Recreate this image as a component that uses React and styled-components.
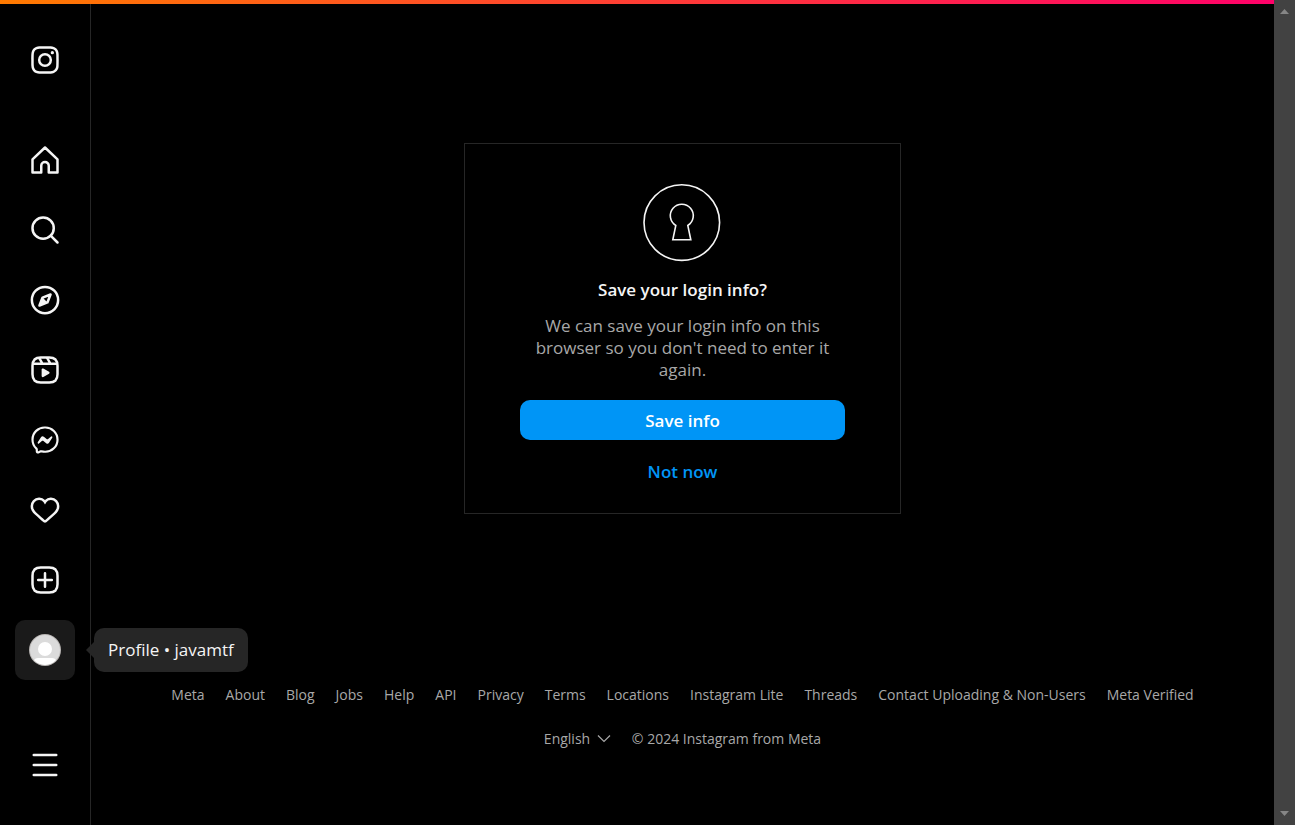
import React from "react";
import styled, { createGlobalStyle } from "styled-components";

const GlobalStyle = createGlobalStyle`
  *, *::before, *::after { box-sizing: border-box; }
  body {
    margin: 0;
    background: #000;
    color: #f5f5f5;
    font-family: "Open Sans", "Noto Sans", sans-serif;
  }
  button, select { font-family: inherit; }
`;

const Shell = styled.div`
  display: flex;
  min-height: 100vh;
`;

const Page = styled.div`
  flex: 1;
  min-width: 0;
  display: flex;
  flex-direction: column;
`;

const LoadingBar = styled.div`
  height: 4px;
  background: linear-gradient(to right, #ff7a00, #ff0169);
`;

const Body = styled.div`
  flex: 1;
  display: flex;
`;

const Sidebar = styled.nav`
  position: relative;
  width: 91px;
  flex: none;
  display: flex;
  flex-direction: column;
  align-items: center;
  justify-content: space-between;
  padding: 26px 0 30px;
  border-right: 1px solid #262626;
`;

const NavGroup = styled.div`
  display: flex;
  flex-direction: column;
  gap: 40px;
`;

const NavList = styled.ul`
  list-style: none;
  margin: 0;
  padding: 0;
  display: flex;
  flex-direction: column;
  gap: 10px;
`;

const NavItem = styled.li`
  position: relative;
`;

const navTarget = `
  width: 60px;
  height: 60px;
  display: flex;
  align-items: center;
  justify-content: center;
  padding: 0;
  border: 0;
  border-radius: 10px;
  color: #f5f5f5;
`;

const NavLink = styled.a`
  ${navTarget}
  background: ${(p) => (p.$active ? "#1a1a1a" : "transparent")};
`;

const NavButton = styled.button`
  ${navTarget}
  background: transparent;
  cursor: pointer;
`;

const Icon = styled.svg`
  display: block;
  width: 30px;
  height: 30px;
  fill: currentColor;
`;

const Avatar = styled.svg`
  display: block;
  width: 32px;
  height: 32px;
`;

const Tooltip = styled.div`
  position: absolute;
  left: 79px;
  top: 8px;
  z-index: 1;
  height: 44px;
  padding: 0 14px;
  border-radius: 10px;
  background: #262626;
  font-size: 17px;
  line-height: 44px;
  white-space: nowrap;

  &::before {
    content: "";
    position: absolute;
    left: -8px;
    top: 14px;
    border-style: solid;
    border-width: 8px 8px 8px 0;
    border-color: transparent #262626;
  }
`;

const Main = styled.main`
  flex: 1;
  min-width: 0;
  display: flex;
  flex-direction: column;
`;

const Stage = styled.section`
  flex: 1;
  display: flex;
  align-items: center;
  justify-content: center;
`;

const Card = styled.div`
  width: 437px;
  max-width: 100%;
  padding: 40px 55px 30px;
  border: 1px solid #262626;
  display: flex;
  flex-direction: column;
  align-items: center;
  text-align: center;
`;

const Keyhole = styled.svg`
  display: block;
  width: 79px;
  height: 78px;
  fill: none;
  stroke: #f5f5f5;
`;

const Title = styled.h1`
  margin: 16px 0 13px;
  font-size: 17px;
  line-height: 24px;
  font-weight: 600;
`;

const Message = styled.p`
  margin: 0 0 19px;
  padding: 0 10px;
  font-size: 17px;
  line-height: 22px;
  color: #a8a8a8;
`;

const PrimaryButton = styled.button`
  width: 100%;
  height: 40px;
  border: 0;
  border-radius: 10px;
  background: #0095f6;
  color: #fff;
  font-size: 17px;
  font-weight: 600;
  cursor: pointer;
`;

const TextButton = styled.button`
  margin-top: 21px;
  padding: 0;
  border: 0;
  background: none;
  color: #0095f6;
  font-size: 17px;
  line-height: 22px;
  font-weight: 600;
  cursor: pointer;
`;

const Footer = styled.footer`
  display: flex;
  flex-direction: column;
  align-items: center;
  gap: 20px;
  padding: 30px 20px 74px;
  font-size: 14px;
  line-height: 24px;
  color: #a8a8a8;
`;

const FooterRow = styled.div`
  display: flex;
  flex-wrap: wrap;
  justify-content: center;
  column-gap: 21px;
`;

const FooterLink = styled.a`
  color: inherit;
  text-decoration: none;
`;

const Language = styled.label`
  display: flex;
  align-items: center;
  gap: 6px;
`;

const LanguageSelect = styled.select`
  appearance: none;
  padding: 0;
  border: 0;
  background: #000;
  color: inherit;
  font-size: 14px;
  line-height: 24px;
`;

const Chevron = styled.svg`
  width: 14px;
  height: 14px;
  fill: none;
  stroke: currentColor;
`;

const ScrollTrack = styled.div`
  width: 21px;
  flex: none;
  display: flex;
  flex-direction: column;
  align-items: center;
  justify-content: space-between;
  padding: 9px 0;
  background: #424242;
`;

const ScrollArrow = styled.svg`
  display: block;
  width: 9px;
  height: 5px;
  fill: #868686;
`;

const stroke = {
  fill: "none",
  stroke: "currentColor",
  strokeWidth: 2,
  strokeLinecap: "round",
  strokeLinejoin: "round",
};

const LogoIcon = () => (
  <Icon viewBox="0 0 24 24" aria-hidden="true">
    <path d="M12 2.982c2.937 0 3.285.011 4.445.064a6.087 6.087 0 0 1 2.042.379 3.408 3.408 0 0 1 1.265.823 3.408 3.408 0 0 1 .823 1.265 6.087 6.087 0 0 1 .379 2.042c.053 1.16.064 1.508.064 4.445s-.011 3.285-.064 4.445a6.087 6.087 0 0 1-.379 2.042 3.643 3.643 0 0 1-2.088 2.088 6.087 6.087 0 0 1-2.042.379c-1.16.053-1.508.064-4.445.064s-3.285-.011-4.445-.064a6.087 6.087 0 0 1-2.043-.379 3.408 3.408 0 0 1-1.264-.823 3.408 3.408 0 0 1-.823-1.265 6.087 6.087 0 0 1-.379-2.042c-.053-1.16-.064-1.508-.064-4.445s.011-3.285.064-4.445a6.087 6.087 0 0 1 .379-2.042 3.408 3.408 0 0 1 .823-1.265 3.408 3.408 0 0 1 1.265-.823 6.087 6.087 0 0 1 2.042-.379c1.16-.053 1.508-.064 4.445-.064M12 1c-2.987 0-3.362.013-4.535.066a8.074 8.074 0 0 0-2.67.511 5.392 5.392 0 0 0-1.949 1.27 5.392 5.392 0 0 0-1.269 1.948 8.074 8.074 0 0 0-.51 2.67C1.012 8.638 1 9.013 1 12s.013 3.362.066 4.535a8.074 8.074 0 0 0 .511 2.67 5.392 5.392 0 0 0 1.27 1.949 5.392 5.392 0 0 0 1.948 1.269 8.074 8.074 0 0 0 2.67.51C8.638 22.988 9.013 23 12 23s3.362-.013 4.535-.066a8.074 8.074 0 0 0 2.67-.511 5.625 5.625 0 0 0 3.218-3.218 8.074 8.074 0 0 0 .51-2.67C22.988 15.362 23 14.987 23 12s-.013-3.362-.066-4.535a8.074 8.074 0 0 0-.511-2.67 5.392 5.392 0 0 0-1.27-1.949 5.392 5.392 0 0 0-1.948-1.269 8.074 8.074 0 0 0-2.67-.51C15.362 1.012 14.987 1 12 1Zm0 5.351A5.649 5.649 0 1 0 17.649 12 5.649 5.649 0 0 0 12 6.351Zm0 9.316A3.667 3.667 0 1 1 15.667 12 3.667 3.667 0 0 1 12 15.667Zm5.872-10.859a1.32 1.32 0 1 0 1.32 1.32 1.32 1.32 0 0 0-1.32-1.32Z" />
  </Icon>
);

const HomeIcon = () => (
  <Icon viewBox="0 0 24 24" aria-hidden="true">
    <path
      {...stroke}
      strokeLinecap="butt"
      d="M9.005 16.545a2.997 2.997 0 0 1 2.997-2.997A2.997 2.997 0 0 1 15 16.545V22h7V11.543L12 2 2 11.543V22h7.005Z"
    />
  </Icon>
);

const SearchIcon = () => (
  <Icon viewBox="0 0 24 24" aria-hidden="true">
    <path {...stroke} d="M19 10.5A8.5 8.5 0 1 1 10.5 2a8.5 8.5 0 0 1 8.5 8.5Z" />
    <path {...stroke} d="M16.511 16.511 22 22" />
  </Icon>
);

const ExploreIcon = () => (
  <Icon viewBox="0 0 24 24" aria-hidden="true">
    <path {...stroke} d="M13.941 13.953 7.581 16.424 10.06 10.056 16.42 7.585Z" />
    <path fillRule="evenodd" d="M10.06 10.056 13.949 13.945 7.581 16.424Z" />
    <circle {...stroke} cx="12.001" cy="12.005" r="10.5" />
  </Icon>
);

const ReelsIcon = () => (
  <Icon viewBox="0 0 24 24" aria-hidden="true">
    <path {...stroke} strokeLinecap="butt" d="M2.049 7.002H21.95M13.504 2.001l2.858 5.001M7.207 2.11l2.795 4.892" />
    <path
      {...stroke}
      d="M2 12.001v3.449c0 2.849.698 4.006 1.606 4.945.94.908 2.098 1.607 4.946 1.607h6.896c2.848 0 4.006-.699 4.946-1.607.908-.939 1.606-2.096 1.606-4.945V8.552c0-2.848-.698-4.006-1.606-4.945C19.454 2.699 18.296 2 15.448 2H8.552c-2.848 0-4.006.699-4.946 1.607C2.698 4.546 2 5.704 2 8.552Z"
    />
    <path d="M9.763 17.664a.908.908 0 0 1-.454-.787V11.63a.909.909 0 0 1 1.364-.788l4.545 2.624a.909.909 0 0 1 0 1.575l-4.545 2.624a.91.91 0 0 1-.91 0Z" />
  </Icon>
);

const MessengerIcon = () => (
  <Icon viewBox="0 0 24 24" aria-hidden="true">
    <path
      fill="none"
      stroke="currentColor"
      strokeWidth="1.739"
      d="M12.003 2.001a9.705 9.705 0 1 1 0 19.4 10.876 10.876 0 0 1-2.895-.384.798.798 0 0 0-.533.04l-1.984.876a.801.801 0 0 1-1.123-.708l-.054-1.78a.806.806 0 0 0-.27-.569 9.49 9.49 0 0 1-3.14-7.175 9.65 9.65 0 0 1 10-9.7Z"
    />
    <path d="M17.79 10.132a.659.659 0 0 0-.962-.873l-2.556 2.05a.63.63 0 0 1-.758.002L11.06 9.47a1.576 1.576 0 0 0-2.277.42l-2.567 3.98a.659.659 0 0 0 .961.875l2.556-2.049a.63.63 0 0 1 .759-.002l2.452 1.84a1.576 1.576 0 0 0 2.278-.42Z" />
  </Icon>
);

const HeartIcon = () => (
  <Icon viewBox="0 0 24 24" aria-hidden="true">
    <path d="M16.792 3.904A4.989 4.989 0 0 1 21.5 9.122c0 3.072-2.652 4.959-5.197 7.222-2.512 2.243-3.865 3.469-4.303 3.752-.477-.309-2.143-1.823-4.303-3.752C5.141 14.072 2.5 12.167 2.5 9.122a4.989 4.989 0 0 1 4.708-5.218 4.21 4.21 0 0 1 3.675 1.941c.84 1.175.98 1.763 1.12 1.763s.278-.588 1.11-1.766a4.17 4.17 0 0 1 3.679-1.938m0-2a6.04 6.04 0 0 0-4.797 2.127 6.052 6.052 0 0 0-4.787-2.127A6.985 6.985 0 0 0 .5 9.122c0 3.61 2.55 5.827 5.015 7.97.283.246.569.494.853.747l1.027.918a44.998 44.998 0 0 0 3.518 3.018 2 2 0 0 0 2.174 0 45.263 45.263 0 0 0 3.626-3.115l.922-.824c.293-.26.59-.519.885-.774 2.334-2.025 4.98-4.32 4.98-7.94a6.985 6.985 0 0 0-6.708-7.218Z" />
  </Icon>
);

const CreateIcon = () => (
  <Icon viewBox="0 0 24 24" aria-hidden="true">
    <path
      {...stroke}
      d="M2 12v3.45c0 2.849.698 4.005 1.606 4.944.94.909 2.098 1.608 4.946 1.608h6.896c2.848 0 4.006-.7 4.946-1.608C21.302 19.455 22 18.3 22 15.45V8.552c0-2.849-.698-4.006-1.606-4.945C19.454 2.7 18.296 2 15.448 2H8.552c-2.848 0-4.006.699-4.946 1.607C2.698 4.547 2 5.703 2 8.552Z"
    />
    <path {...stroke} d="M6.545 12.001h10.91M12.003 6.545v10.91" />
  </Icon>
);

const MenuIcon = () => (
  <Icon viewBox="0 0 24 24" aria-hidden="true">
    <path {...stroke} d="M3 4h18M3 12h18M3 20h18" />
  </Icon>
);

const navItems = [
  { label: "Home", Glyph: HomeIcon },
  { label: "Search", Glyph: SearchIcon },
  { label: "Explore", Glyph: ExploreIcon },
  { label: "Reels", Glyph: ReelsIcon },
  { label: "Messenger", Glyph: MessengerIcon },
  { label: "Notifications", Glyph: HeartIcon },
  { label: "New post", Glyph: CreateIcon },
];

const footerLinks = [
  "Meta",
  "About",
  "Blog",
  "Jobs",
  "Help",
  "API",
  "Privacy",
  "Terms",
  "Locations",
  "Instagram Lite",
  "Threads",
  "Contact Uploading & Non-Users",
  "Meta Verified",
];

export default function App() {
  return (
    <>
      <GlobalStyle />
      <Shell>
        <Page>
          <LoadingBar />
          <Body>
            <Sidebar>
              <NavGroup>
                <NavLink href="#" aria-label="Instagram">
                  <LogoIcon />
                </NavLink>
                <NavList>
                  {navItems.map(({ label, Glyph }) => (
                    <NavItem key={label}>
                      <NavLink href="#" aria-label={label}>
                        <Glyph />
                      </NavLink>
                    </NavItem>
                  ))}
                  <NavItem>
                    <NavLink href="#" $active aria-label="Profile" aria-describedby="profile-tip">
                      <Avatar viewBox="0 0 32 32" aria-hidden="true">
                        <clipPath id="avatar-clip">
                          <circle cx="16" cy="16" r="15" />
                        </clipPath>
                        <circle cx="16" cy="16" r="16" fill="#b9b6b4" />
                        <g clipPath="url(#avatar-clip)">
                          <rect width="32" height="32" fill="#dbdbdb" />
                          <circle cx="16" cy="15" r="7" fill="#fff" />
                          <path d="M5 32v-5c0-2 2-3 4-3h14c2 0 4 1 4 3v5Z" fill="#fff" />
                        </g>
                      </Avatar>
                    </NavLink>
                    <Tooltip id="profile-tip" role="tooltip">
                      Profile • javamtf
                    </Tooltip>
                  </NavItem>
                </NavList>
              </NavGroup>
              <NavButton type="button" aria-label="More">
                <MenuIcon />
              </NavButton>
            </Sidebar>
            <Main>
              <Stage>
                <Card>
                  <Keyhole viewBox="0 0 79 78" aria-hidden="true">
                    <circle cx="38.8" cy="38.6" r="37.8" strokeWidth="1.6" />
                    <path
                      strokeWidth="1.6"
                      d="M32.8 41.5A11.5 11.5 0 1 1 44.8 41.5L47.8 55.8H29.8Z"
                    />
                  </Keyhole>
                  <Title>Save your login info?</Title>
                  <Message>
                    We can save your login info on this browser so you don't need to enter it again.
                  </Message>
                  <PrimaryButton type="button">Save info</PrimaryButton>
                  <TextButton type="button">Not now</TextButton>
                </Card>
              </Stage>
              <Footer>
                <FooterRow>
                  {footerLinks.map((text) => (
                    <FooterLink key={text} href="#">
                      {text}
                    </FooterLink>
                  ))}
                </FooterRow>
                <FooterRow>
                  <Language>
                    <LanguageSelect aria-label="Switch display language">
                      <option>English</option>
                    </LanguageSelect>
                    <Chevron viewBox="0 0 14 14" aria-hidden="true">
                      <path d="M1 3.5 7 9.5 13 3.5" strokeWidth="1.2" />
                    </Chevron>
                  </Language>
                  <span>© 2024 Instagram from Meta</span>
                </FooterRow>
              </Footer>
            </Main>
          </Body>
        </Page>
        <ScrollTrack aria-hidden="true">
          <ScrollArrow viewBox="0 0 9 5">
            <path d="M4.5 0 9 5H0Z" />
          </ScrollArrow>
          <ScrollArrow viewBox="0 0 9 5">
            <path d="M0 0h9L4.5 5Z" />
          </ScrollArrow>
        </ScrollTrack>
      </Shell>
    </>
  );
}
